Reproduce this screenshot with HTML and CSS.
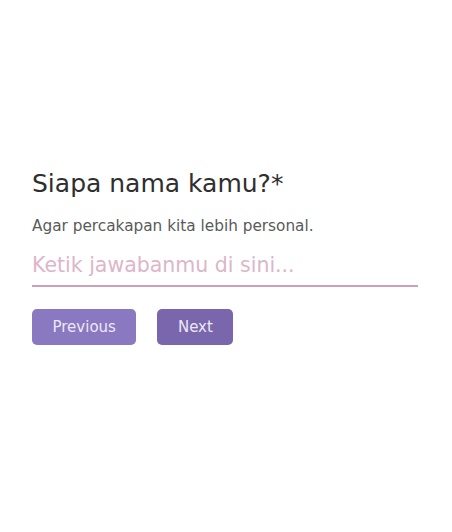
FILE: index.html
```
<!DOCTYPE html>
<html lang="id">
<head>
<meta charset="utf-8">
<link rel="stylesheet" href="styles.css">
</head>
<body>
<main class="page">
  <section class="question">
    <h1 class="title">Siapa nama kamu?*</h1>
    <p class="subtitle">Agar percakapan kita lebih personal.</p>
    <input class="answer" type="text" placeholder="Ketik jawabanmu di sini...">
    <div class="actions">
      <button class="btn btn-prev">Previous</button>
      <button class="btn btn-next">Next</button>
    </div>
  </section>
</main>
</body>
</html>
```
FILE: styles.css
```
html, body {
  margin: 0;
  padding: 0;
  background: #ffffff;
}
body {
  font-family: "DejaVu Sans", "Open Sans", sans-serif;
  width: 452px;
  height: 532px;
}
.page {
  padding: 166px 34px 0 32px;
}
.question {
  display: flex;
  flex-direction: column;
}
.title {
  margin: 0;
  font-size: 25px;
  font-weight: 400;
  color: #2f2f2f;
  line-height: 36px;
}
.subtitle {
  margin: 13px 0 0;
  font-size: 15.3px;
  color: #5a5a5a;
  line-height: 22px;
}
.answer {
  margin-top: 13px;
  border: none;
  border-bottom: 2px solid #c9a3b6;
  outline: none;
  padding: 0 0 5px;
  font-family: inherit;
  font-size: 20.5px;
  line-height: 30px;
  color: #333;
  background: transparent;
}
.answer::placeholder {
  color: #dcb6c9;
}
.actions {
  display: flex;
  gap: 21px;
  margin-top: 22px;
}
.btn {
  border: none;
  border-radius: 5px;
  height: 36px;
  padding: 0 20.5px;
  font-family: inherit;
  font-size: 15px;
  color: #ece8f6;
  cursor: pointer;
}
.btn-prev {
  background: #8a78c1;
}
.btn-next {
  background: #7a66ac;
}
```
